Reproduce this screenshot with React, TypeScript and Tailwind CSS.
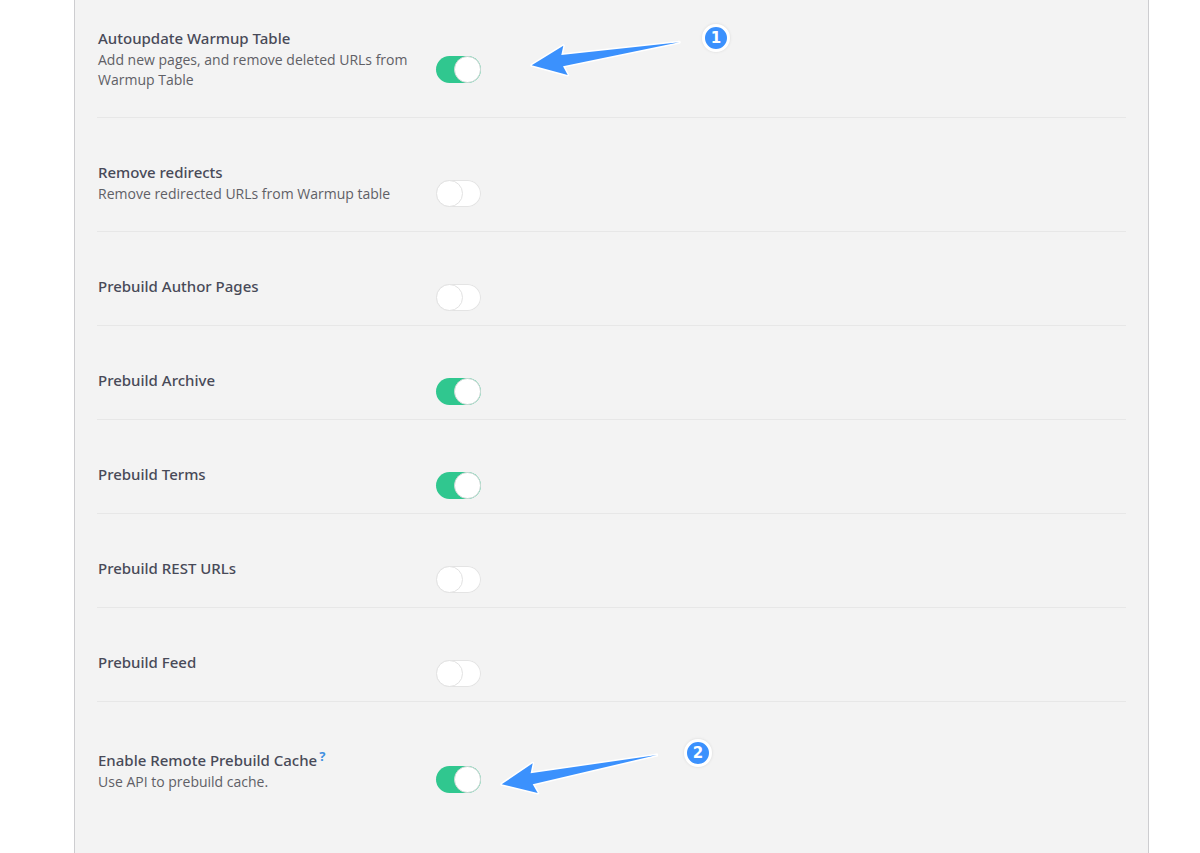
import { useState } from "react";

type Setting = {
  id: string;
  title: string;
  description?: string;
  help?: boolean;
  enabled: boolean;
};

const settings: Setting[] = [
  {
    id: "autoupdate",
    title: "Autoupdate Warmup Table",
    description: "Add new pages, and remove deleted URLs from Warmup Table",
    enabled: true,
  },
  {
    id: "redirects",
    title: "Remove redirects",
    description: "Remove redirected URLs from Warmup table",
    enabled: false,
  },
  { id: "author", title: "Prebuild Author Pages", enabled: false },
  { id: "archive", title: "Prebuild Archive", enabled: true },
  { id: "terms", title: "Prebuild Terms", enabled: true },
  { id: "rest", title: "Prebuild REST URLs", enabled: false },
  { id: "feed", title: "Prebuild Feed", enabled: false },
  {
    id: "remote",
    title: "Enable Remote Prebuild Cache",
    description: "Use API to prebuild cache.",
    help: true,
    enabled: true,
  },
];

function Toggle({ id, initial }: { id: string; initial: boolean }) {
  const [on, setOn] = useState(initial);
  return (
    <input
      id={id}
      type="checkbox"
      checked={on}
      onChange={(e) => setOn(e.target.checked)}
      className="block h-[27px] w-[45px] cursor-pointer appearance-none rounded-full bg-white shadow-[inset_0_0_0_1px_#e4e4e4] before:block before:size-[27px] before:rounded-full before:border before:border-[#e2e2e2] before:bg-white before:content-[''] checked:bg-[#30c78f] checked:shadow-none checked:before:ml-[18px] checked:before:border-[#d3d9d7]"
    />
  );
}

function Arrow({ points }: { points: string }) {
  return (
    <svg aria-hidden="true" width="168" height="56" viewBox="0 0 168 56" className="mt-1">
      <polygon
        points={points}
        fill="#fff"
        stroke="#fff"
        strokeWidth="3"
        strokeLinejoin="round"
      />
      <polygon points={points} fill="#3b91fd" />
    </svg>
  );
}

function Badge({ value }: { value: string }) {
  return (
    <span className="flex size-7 items-center justify-center rounded-full border-[3px] border-white bg-[#3b91fd] font-['DejaVu_Sans',sans-serif] text-[15px] leading-4 font-bold text-white shadow-[0_0_2px_1px_#e6e6e6]">
      {value}
    </span>
  );
}

function SettingRow({ item }: { item: Setting }) {
  return (
    <div className="flex items-center border-b border-[#e7e7e7] pt-11 pb-[27px] first:pt-7 last:border-b-0">
      <div className="w-[339px] shrink-0 pr-6 pl-px">
        <div className={item.help ? "flex pt-1 pb-0.5" : "flex pb-0.5"}>
          <label
            htmlFor={item.id}
            className="text-[15px] leading-5 font-medium text-[#484a58]"
          >
            {item.title}
          </label>
          {item.help && (
            <a
              href="#help"
              aria-label="Help"
              className="ml-0.5 text-[13px] leading-3 font-bold text-[#3f8fe0]"
            >
              ?
            </a>
          )}
        </div>
        {item.description && (
          <p className="font-['Open_Sans',sans-serif] text-sm leading-5 text-[#5f6066]">
            {item.description}
          </p>
        )}
      </div>
      <div className="-my-4 pt-5">
        <Toggle id={item.id} initial={item.enabled} />
      </div>
      {item.id === "autoupdate" && (
        <div className="-my-6 ml-[39px] flex h-[70px] items-start gap-[14px]">
          <Arrow points="11.7,37.3 43.3,17.7 41.3,27 159.3,14.3 43,38.3 47.7,47" />
          <Badge value="1" />
        </div>
      )}
      {item.id === "remote" && (
        <div className="-my-6 ml-[9px] flex h-[60px] items-start gap-[26px]">
          <Arrow points="11.7,41.3 42.7,20.3 40.6,30.3 167,12 42.7,41.3 47.7,50" />
          <Badge value="2" />
        </div>
      )}
    </div>
  );
}

export default function App() {
  return (
    <div className="min-h-screen bg-white pr-[51px] pl-[74px] font-['Noto_Sans','Open_Sans',sans-serif]">
      <main className="min-h-screen border-x border-[#cdcdd0] bg-[#f3f3f3] px-[22px]">
        {settings.map((item) => (
          <SettingRow key={item.id} item={item} />
        ))}
      </main>
    </div>
  );
}
